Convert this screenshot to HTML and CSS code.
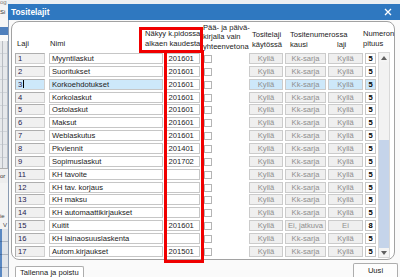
FILE: index.html
```html
<!DOCTYPE html>
<html lang="fi">
<head>
  <meta charset="UTF-8" />
  <meta name="viewport" content="width=device-width, initial-scale=1.0"/>
  <title>Tositelajit</title>
  <link rel="stylesheet" href="styles.css">
</head>
<body>
  <div class="desktop">
    <!-- Taustalla oleva ohjelma -->
    <div class="tausta">
      <div class="t-rivi t-harmaa">og</div>
      <div class="t-rivi t-tumma">Si</div>
      <div class="t-rivi t-vaalea"></div>
      <div class="t-rivi t-sininen"></div>
      <div class="t-rivi t-valkoinen"></div>
      <div class="t-rivi t-solut"></div>
      <div class="t-rivi t-teksti">or</div>
      <div class="t-rivi t-vaalea2"></div>
      <div class="t-rivi t-teksti2">ie</div>
      <div class="t-rivi t-teksti3">V</div>
      <div class="t-rivi t-sarake"></div>
    </div>

    <div class="ikkuna">
      <div class="otsikko">
        <span>Tositelajit</span>
        <svg class="sulje" width="8" height="8" viewBox="0 0 8 8">
          <path d="M1 1 L7 7 M7 1 L1 7" stroke="#fff" stroke-width="1.3" fill="none"/>
        </svg>
      </div>

      <div class="sisalto">
        <div class="paneeli">
          <div class="otsikkorivi">
            <div class="h h-laji">Laji</div>
            <div class="h h-nimi">Nimi</div>
            <div class="h h-kausi">Näkyy k.pidossa<br>alkaen kaudesta</div>
            <div class="h h-paiva">Pää- ja päivä-<br>kirjalla vain<br>yhteenvetona</div>
            <div class="h h-kaytossa">Tositelaji<br>käytössä</div>
            <div class="h h-numero">Tositenumerossa<br><span class="h-kausi2">kausi</span><span>laji</span></div>
            <div class="h h-pituus">Numeron<br>pituus</div>
          </div>

          <div class="runko">
            <div class="rivit" id="rivit"></div>
            <div class="vierityspalkki">
              <div class="nuoli">
                <svg width="6" height="4" viewBox="0 0 6 4"><path d="M0 4 L3 0 L6 4 Z" fill="#606060"/></svg>
              </div>
              <div class="ura"></div>
              <div class="peukalo"></div>
              <div class="nuoli">
                <svg width="6" height="4" viewBox="0 0 6 4"><path d="M0 0 L3 4 L6 0 Z" fill="#606060"/></svg>
              </div>
            </div>
          </div>
        </div>

        <div class="alapalkki">
          <div class="tallenna-btn">Tallenna ja poistu</div>
          <div class="uusi-btn">Uusi</div>
        </div>
      </div>
    </div>

    <!-- Punaiset korostukset -->
    <div class="korostus korostus-otsikko"></div>
    <div class="korostus korostus-sarake"></div>
  </div>

  <script>
    const tositelajit = [
      { laji: 1, nimi: "Myyntilaskut", kausi: "201601" },
      { laji: 2, nimi: "Suoritukset", kausi: "201601" },
      { laji: 3, nimi: "Korkoehdotukset", kausi: "201601", valittu: true },
      { laji: 4, nimi: "Korkolaskut", kausi: "201601" },
      { laji: 5, nimi: "Ostolaskut", kausi: "201601" },
      { laji: 6, nimi: "Maksut", kausi: "201601" },
      { laji: 7, nimi: "Weblaskutus", kausi: "201601" },
      { laji: 8, nimi: "Pkviennit", kausi: "201401" },
      { laji: 9, nimi: "Sopimuslaskut", kausi: "201702" },
      { laji: 11, nimi: "KH tavoite", kausi: "" },
      { laji: 12, nimi: "KH tav. korjaus", kausi: "" },
      { laji: 13, nimi: "KH maksu", kausi: "" },
      { laji: 14, nimi: "KH automaattikirjaukset", kausi: "" },
      { laji: 15, nimi: "Kuitit", kausi: "201601", numKausi: "Ei, jatkuva", numLaji: "Ei", pituus: 8 },
      { laji: 16, nimi: "KH lainaosuuslaskenta", kausi: "" },
      { laji: 17, nimi: "Autom.kirjaukset", kausi: "201501" }
    ];

    const rivit = document.getElementById("rivit");

    tositelajit.forEach(item => {
      const valittu = item.valittu ? " valittu" : "";
      rivit.innerHTML += `
        <div class="kentta laji${valittu}">${item.laji}${item.valittu ? '<span class="kursori"></span>' : ''}</div>
        <div class="kentta nimi${valittu}">${item.nimi}</div>
        <div class="kentta arvo">${item.kausi}</div>
        <div class="valinta"></div>
        <div class="kentta nappi${valittu}">Kyllä</div>
        <div class="kentta nappi kk${valittu}">${item.numKausi || 'Kk-sarja'}</div>
        <div class="kentta nappi laji2${valittu}">${item.numLaji || 'Kyllä'}</div>
        <div class="kentta pituus${valittu}">${item.pituus || 5}</div>
      `;
    });
  </script>
</body>
</html>
```

FILE: styles.css
```css
body {
  margin: 0;
  padding: 0;
  font-family: 'Liberation Sans', Arial, sans-serif;
  font-size: 7.6px;
  color: #1a1a1a;
  background: #eceff2;
}

.desktop {
  position: relative;
  width: 400px;
  height: 277px;
  overflow: hidden;
  background: #eceff2;
}

/* Taustaohjelma vasemmassa reunassa */
.tausta {
  width: 8px;
  height: 277px;
  display: flex;
  flex-direction: column;
  overflow: hidden;
  background: #e4e7ea;
}

.t-rivi {
  flex: none;
  overflow: hidden;
  white-space: nowrap;
  line-height: 7px;
  font-size: 6px;
}

.t-harmaa { height: 6px; color: #7a7a7a; background: #f2f2f2; line-height: 5px; }
.t-tumma { height: 12px; color: #333; background: #f4f4f4; line-height: 12px; }
.t-vaalea { height: 9px; background: #f6f6f6; }
.t-sininen { height: 8px; background: #4f80bd; }
.t-valkoinen { height: 6px; background: #fbfbfb; }
.t-solut {
  height: 127px;
  background:
    linear-gradient(90deg, transparent 2px, #b8bcc2 2px, #b8bcc2 3px, transparent 3px, transparent 7px, #b8bcc2 7px),
    repeating-linear-gradient(180deg, #e6e8eb 0, #e6e8eb 12px, #cfd3d8 12px, #cfd3d8 13px);
}
.t-teksti { height: 14px; line-height: 14px; color: #333; background: #eeeeee; border-top: 1px solid #b0b0b0; }
.t-vaalea2 { height: 28px; background: #f3f3f3; }
.t-teksti2 { height: 10px; line-height: 10px; color: #444; background: #f3f3f3; }
.t-teksti3 { height: 8px; line-height: 8px; color: #444; background: #f3f3f3; text-indent: 3px; }
.t-sarake {
  flex: 1;
  background:
    linear-gradient(90deg, #5a88c2 0, #5a88c2 2px, #e0e4ea 2px),
    repeating-linear-gradient(180deg, transparent 0, transparent 12px, #c8ccd2 12px, #c8ccd2 13px);
  background-blend-mode: multiply;
}

/* Ikkuna */
.ikkuna {
  position: absolute;
  left: 8px;
  top: 4px;
  width: 392px;
  height: 273px;
  box-sizing: border-box;
  border-left: 1px solid #8a9bb2;
  background: #fafafa;
}

.otsikko {
  height: 16px;
  margin-left: -1px;
  padding: 0 8px 0 3px;
  display: flex;
  align-items: center;
  justify-content: space-between;
  background: #2f78c0;
  color: #fff;
  font-weight: bold;
  font-size: 8.4px;
}

.sisalto {
  padding: 1px 0 0 2px;
}

.paneeli {
  width: 384px;
  box-sizing: border-box;
  border: 1px solid #a2a2a2;
  border-radius: 8px;
  background: #fff;
  padding: 0 0 0 3px;
}

.otsikkorivi {
  height: 31px;
  display: flex;
  line-height: 10px;
  white-space: nowrap;
  color: #222;
}

.h { flex: none; overflow: visible; }
.h-laji { width: 33px; padding: 17px 0 0 2px; }
.h-nimi { width: 95px; padding-top: 17px; }
.h-kausi { width: 58px; padding-top: 7px; }
.h-paiva { width: 49px; padding-top: 1px; line-height: 9.4px; }
.h-kaytossa { width: 38px; padding-top: 8px; }
.h-numero { width: 73px; padding-top: 7.5px; }
.h-kausi2 { display: inline-block; width: 47px; }
.h-pituus { width: 30px; padding-top: 7px; }

.runko {
  display: flex;
  gap: 2px;
}

.rivit {
  display: grid;
  grid-template-columns: 34px 117px 38px 45px 36px 43px 37px 11px;
  grid-auto-rows: 12.87px;
}

.kentta {
  height: 11px;
  box-sizing: border-box;
  border: 1px solid #c6c6c6;
  line-height: 9px;
  padding: 0 2px;
  white-space: nowrap;
  overflow: hidden;
  background: #fff;
}

.laji {
  width: 30px;
  background: #f0f0f0;
  border-color: #aeaeae #d0d0d0 #d0d0d0 #aeaeae;
  color: #24204e;
}

.kursori {
  display: inline-block;
  width: 1px;
  height: 8px;
  margin-left: 1px;
  vertical-align: -1px;
  background: #000;
}

.nimi { width: 114px; }
.arvo { width: 34px; padding-left: 1.5px; }

.valinta {
  width: 8px;
  height: 8px;
  margin: 2px 0 0 0;
  box-sizing: border-box;
  border: 1px solid #b4b4b4;
  background: #fff;
}

.nappi {
  width: 34px;
  text-align: center;
  padding: 0;
  background: #efefef;
  border-color: #cbcbcb;
  color: #8e8e8e;
}

.nappi.kk { width: 41px; }
.nappi.laji2 { width: 35px; }

.pituus {
  width: 11px;
  padding: 0;
  text-align: center;
  color: #000;
  font-weight: bold;
}

.valittu {
  background: #cde8fa;
}

.vierityspalkki {
  width: 12px;
  height: 206px;
  margin-top: -1px;
  box-sizing: border-box;
  border: 1px solid #d8d8d8;
  background: #f2f2f2;
  display: flex;
  flex-direction: column;
}

.nuoli {
  height: 9px;
  display: flex;
  align-items: center;
  justify-content: center;
  background: #f4f4f4;
}

.ura { height: 78px; }

.peukalo {
  flex: 1;
  background: #c5d4ea;
}

.alapalkki {
  display: flex;
  justify-content: space-between;
  padding: 0 0 0 4px;
  width: 383px;
}

.tallenna-btn {
  margin-top: 6px;
  height: 14px;
  padding: 0 4px;
  line-height: 12px;
  border: 1px solid #adadad;
  border-bottom: none;
  border-radius: 2px 2px 0 0;
  background: #fff;
  width: 59px;
}

.uusi-btn {
  margin-top: 3px;
  width: 45px;
  height: 16px;
  line-height: 14px;
  text-align: center;
  box-sizing: border-box;
  border: 1px solid #adadad;
  border-bottom: none;
  border-radius: 2px 2px 0 0;
  background: #fdfdfd;
}

/* Punaiset kehykset */
.korostus {
  position: absolute;
  box-sizing: border-box;
  border: 3px solid #f00000;
}

.korostus-otsikko {
  left: 139px;
  top: 27px;
  width: 64px;
  height: 26px;
}

.korostus-sarake {
  left: 164px;
  top: 50px;
  width: 40px;
  height: 213px;
}
```
